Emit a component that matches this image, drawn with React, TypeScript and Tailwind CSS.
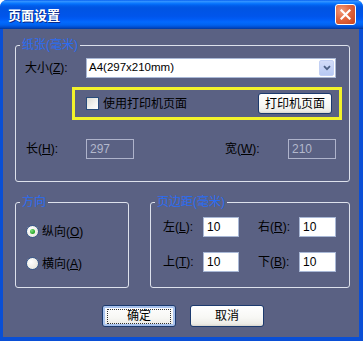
import React from "react";

function Group({
  legend,
  className,
  children,
}: {
  legend: string;
  className: string;
  children?: React.ReactNode;
}) {
  return (
    <div className={`relative border border-[#dde1ec] rounded-[3px] ${className}`}>
      <span className="absolute top-[-8px] left-[4px] px-[2px] bg-[#5a6183] text-[#2b6cf2] text-[12px] leading-[14px]">
        {legend}
      </span>
      {children}
    </div>
  );
}

function U({ c }: { c: string }) {
  return <span className="underline underline-offset-[1px]">{c}</span>;
}

function Input({ value, w }: { value: string; w: string }) {
  return (
    <div
      className={`${w} h-[20px] bg-white border border-[#a9b8d6] flex items-center pl-[3px] text-[12px] text-black leading-none`}
    >
      {value}
    </div>
  );
}

function DisabledInput({ value }: { value: string }) {
  return (
    <div className="w-[48px] h-[20px] border border-[#aeb3cb] flex items-center pl-[3px] text-[12px] text-[#b3b8cc] leading-none">
      {value}
    </div>
  );
}

function Radio({ checked }: { checked?: boolean }) {
  return (
    <div className="w-[13px] h-[13px] rounded-full border border-[#3a5a8c] bg-[radial-gradient(circle_at_35%_35%,#ffffff_0%,#eceae2_70%,#d6d3c8_100%)] flex items-center justify-center">
      {checked && (
        <div className="w-[5px] h-[5px] rounded-full bg-[radial-gradient(circle_at_35%_35%,#7fe07f_0%,#24a524_70%,#1b7f1b_100%)]" />
      )}
    </div>
  );
}

function XPButton({
  label,
  w,
  h,
  focused,
}: {
  label: string;
  w: string;
  h: string;
  focused?: boolean;
}) {
  return (
    <div
      className={`${w} ${h} rounded-[3px] border border-[#1c3a6e] bg-[linear-gradient(180deg,#ffffff_0%,#f7f7f4_60%,#ecebe6_90%,#d8d4cc_100%)] flex items-center justify-center text-[12px] text-black ${
        focused ? "shadow-[inset_0_0_0_2px_#a9c3ee]" : ""
      }`}
    >
      {focused ? (
        <div className="w-[64px] h-[15px] border border-dotted border-[#333] flex items-center justify-center leading-none">
          {label}
        </div>
      ) : (
        <span className="leading-none">{label}</span>
      )}
    </div>
  );
}

export default function App() {
  return (
    <div className="w-[363px] h-[341px] bg-white font-['Liberation_Sans','Noto_Sans_CJK_SC',sans-serif]">
      <div className="w-[363px] h-[341px] flex flex-col rounded-t-[7px] overflow-hidden bg-[#0a4fd6]">
        {/* Title bar */}
        <div className="h-[29px] shrink-0 flex items-center justify-between pl-[8px] pr-[7px] bg-[linear-gradient(180deg,#0058ee_0%,#3593ff_4%,#288eff_7%,#127dff_10%,#036ffc_14%,#0262ee_18%,#0057e5_24%,#0054e3_30%,#0055eb_56%,#005bf5_66%,#026afe_76%,#0062ef_86%,#0052d6_92%,#0045c0_96%,#003a9c_100%)]">
          <span className="text-white font-bold text-[13px] leading-none [text-shadow:1px_1px_0_#0b2a8a] font-['Noto_Sans_CJK_SC',sans-serif]">
            页面设置
          </span>
          <div className="w-[21px] h-[21px] rounded-[3px] border border-white bg-[radial-gradient(circle_at_30%_30%,#f29c7c_0%,#e2663e_45%,#c8421a_100%)] flex items-center justify-center">
            <svg width="11" height="11" viewBox="0 0 11 11">
              <path d="M1.5 1.5 L9.5 9.5 M9.5 1.5 L1.5 9.5" stroke="white" strokeWidth="2.2" strokeLinecap="square" />
            </svg>
          </div>
        </div>

        {/* Body */}
        <div className="flex-1 ml-[3px] mr-[4px] mb-[4px] bg-[#5a6183] flex flex-col text-black text-[12px]">
          {/* Paper group */}
          <Group legend="纸张(毫米)" className="mt-[16px] ml-[12px] w-[335px] h-[137px] shrink-0">
            <div className="mt-[12px] flex items-center pl-[9px]">
              <span className="w-[61px] leading-none">
                大小(<U c="Z" />):
              </span>
              <div className="w-[250px] h-[20px] bg-white border border-[#a9b8d6] flex items-center justify-between pl-[2px] pr-[1px]">
                <span className="text-[11.5px] leading-none">A4(297x210mm)</span>
                <div className="w-[15px] h-[16px] rounded-[2px] bg-[linear-gradient(180deg,#d2dcf8_0%,#b7c9f4_100%)] border border-[#c2d0f4] flex items-center justify-center">
                  <svg width="8" height="6" viewBox="0 0 8 6">
                    <path d="M1 1.2 L4 4.2 L7 1.2" stroke="#4d6185" strokeWidth="1.8" fill="none" />
                  </svg>
                </div>
              </div>
            </div>

            <div className="mt-[9px] ml-[56px] w-[270px] h-[33px] border-[3px] border-[#f2f22a] flex items-center justify-between pl-[11px] pr-[7px]">
              <div className="flex items-center gap-[4px]">
                <div className="w-[13px] h-[13px] border border-[#2a4d7c] bg-[linear-gradient(135deg,#dcdcd4_0%,#f4f4f0_60%,#ffffff_100%)]" />
                <span className="leading-none">使用打印机页面</span>
              </div>
              <XPButton label="打印机页面" w="w-[74px]" h="h-[21px]" />
            </div>

            <div className="mt-[19px] flex items-center pl-[10px]">
              <span className="w-[60px] leading-none">
                长(<U c="H" />):
              </span>
              <DisabledInput value="297" />
              <span className="ml-[91px] w-[63px] leading-none">
                宽(<U c="W" />):
              </span>
              <DisabledInput value="210" />
            </div>
          </Group>

          {/* Lower groups */}
          <div className="mt-[20px] ml-[12px] flex gap-[21px] shrink-0">
            <Group legend="方向" className="w-[114px] h-[86px]">
              <div className="mt-[22px] pl-[10px] flex items-center gap-[3px] h-[13px]">
                <Radio checked />
                <span className="leading-none">
                  纵向(<U c="O" />)
                </span>
              </div>
              <div className="mt-[19px] pl-[10px] flex items-center gap-[3px] h-[13px]">
                <Radio />
                <span className="leading-none">
                  横向(<U c="A" />)
                </span>
              </div>
            </Group>

            <Group legend="页边距(毫米)" className="w-[200px] h-[86px]">
              <div className="mt-[14px] pl-[12px] flex items-center">
                <span className="w-[40px] leading-none">
                  左(<U c="L" />):
                </span>
                <Input value="10" w="w-[36px]" />
                <span className="ml-[19px] w-[41px] leading-none">
                  右(<U c="R" />):
                </span>
                <Input value="10" w="w-[37px]" />
              </div>
              <div className="mt-[15px] pl-[12px] flex items-center">
                <span className="w-[40px] leading-none">
                  上(<U c="T" />):
                </span>
                <Input value="10" w="w-[36px]" />
                <span className="ml-[19px] w-[41px] leading-none">
                  下(<U c="B" />):
                </span>
                <Input value="10" w="w-[37px]" />
              </div>
            </Group>
          </div>

          {/* Buttons */}
          <div className="mt-[17px] flex justify-center gap-[14px] pl-[4px]">
            <XPButton label="确定" w="w-[74px]" h="h-[22px]" focused />
            <XPButton label="取消" w="w-[74px]" h="h-[22px]" />
          </div>
        </div>
      </div>
    </div>
  );
}
